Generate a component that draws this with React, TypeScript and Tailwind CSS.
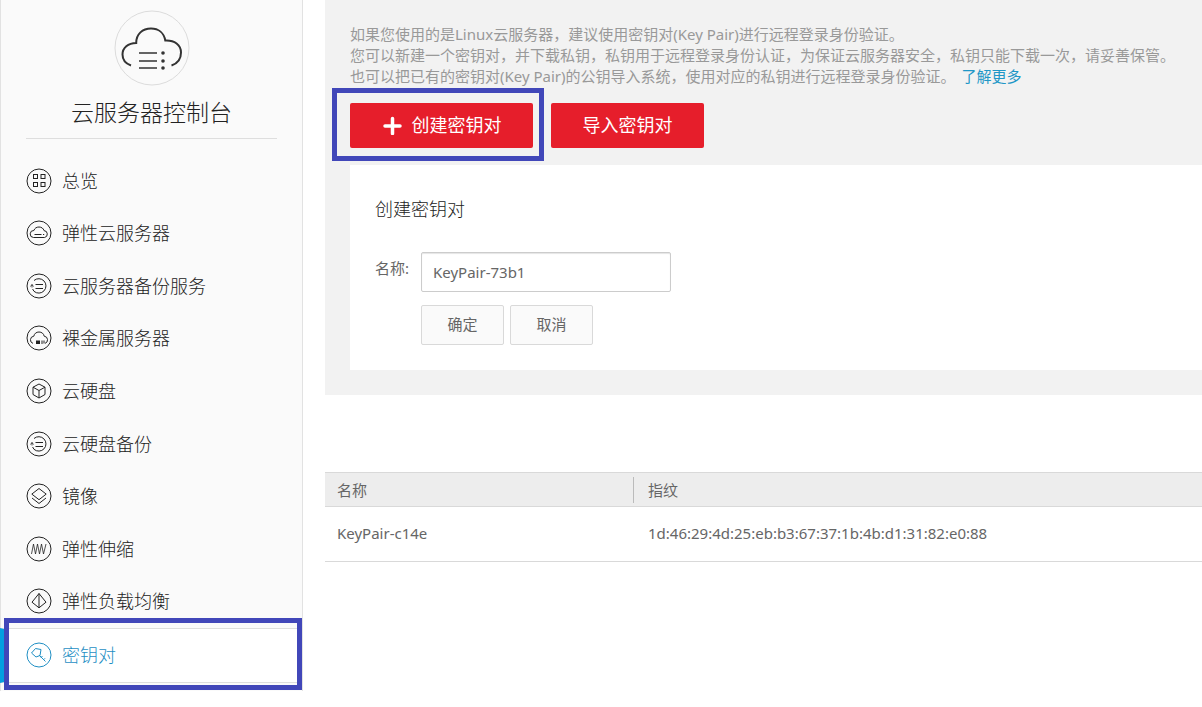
import { useState } from 'react'
import type { ReactNode } from 'react'
import clsx from 'clsx'

interface NavItem {
  key: string
  label: string
  icon: ReactNode
}

const backupIcon = (
  <>
    <path d="M8 7.500A7.200 7.200 0 1 1 8 18.300L6.600 16" />
    <path d="M9.500 11.500h7.500M9.500 15.500h7.500" />
    <path d="M4.500 13.500l1.500-2 1.500 2M6 11.500v3" strokeWidth="0.800" />
  </>
)

const NAV_ITEMS: NavItem[] = [
  {
    key: 'overview',
    label: '总览',
    icon: (
      <>
        <rect x="7.500" y="6.500" width="4" height="4" />
        <rect x="15" y="6.500" width="4" height="4" />
        <rect x="7.500" y="14.500" width="4" height="4" />
        <rect x="15" y="14.500" width="4" height="4" />
      </>
    ),
  },
  {
    key: 'ecs',
    label: '弹性云服务器',
    icon: (
      <>
        <path d="M7.500 17.500a3.500 3.500 0 0 1 .4-7c.7-2.300 2.700-3.500 5.100-3.500s4.400 1.300 5 3.600a3.500 3.500 0 0 1 .6 6.900z" />
        <path d="M8.500 14.500h7M17 14.500h1.200" />
      </>
    ),
  },
  { key: 'csbs', label: '云服务器备份服务', icon: backupIcon },
  {
    key: 'bms',
    label: '裸金属服务器',
    icon: (
      <>
        <path d="M7 18.400a3.700 3.700 0 0 1 .8-7.200C8.300 8.600 10.300 7 13 7s4.700 1.600 5.200 4.200a3.700 3.700 0 0 1 .8 7.200" />
        <rect x="10.500" y="16" width="3" height="2.500" fill="currentColor" />
        <path d="M16 15.500v3.500M18 15.500v3" />
      </>
    ),
  },
  {
    key: 'evs',
    label: '云硬盘',
    icon: (
      <>
        <path d="M13 6l6 3.200v7.300L13 20l-6-3.500V9.200z" />
        <path d="M7 9.200l6 3.300 6-3.300M13 12.500V20" />
      </>
    ),
  },
  { key: 'vbs', label: '云硬盘备份', icon: backupIcon },
  {
    key: 'ims',
    label: '镜像',
    icon: (
      <>
        <path d="M13 5.500l7.200 5.600-7.200 5.600-7.200-5.600z" />
        <path d="M6 15l7 5.500 7-5.500" />
      </>
    ),
  },
  {
    key: 'as',
    label: '弹性伸缩',
    icon: <path d="M5.500 18L7.500 8l2 10 2-10 2 10 2-10 2 10 2.500-10" strokeWidth="0.800" />,
  },
  {
    key: 'elb',
    label: '弹性负载均衡',
    icon: (
      <>
        <path d="M13 5.500l7 8.700-7 5.600-7-5.600z" />
        <path d="M13 5.500v14.300" />
      </>
    ),
  },
  {
    key: 'keypair',
    label: '密钥对',
    icon: (
      <>
        <path d="M9.500 6.500l5.500 1-1 6-4 1.500L5.500 11z" />
        <path d="M13 13l6.500 6.500M15 15.500l1.500-1.500M17.500 17.800l1.500-1.500" />
      </>
    ),
  },
]

const KEY_PAIRS = [
  { name: 'KeyPair-c14e', fingerprint: '1d:46:29:4d:25:eb:b3:67:37:1b:4b:d1:31:82:e0:88' },
]

function NavIcon({ children }: { children: ReactNode }) {
  return (
    <svg
      width="26"
      height="26"
      viewBox="0 0 26 26"
      fill="none"
      stroke="currentColor"
      strokeWidth="1"
      className="shrink-0"
      aria-hidden="true"
    >
      <circle cx="13" cy="13" r="12" />
      {children}
    </svg>
  )
}

function CloudLogo() {
  return (
    <svg width="76" height="76" viewBox="0 0 76 76" fill="none" className="text-[#333]" aria-hidden="true">
      <circle cx="38" cy="38" r="37" stroke="#dcdcdc" />
      <path
        d="M17 55.500C11.500 53.500 8.500 49.500 8.500 44.500c0-6.500 5.500-11.500 13.700-11.500C22.200 24 28.500 18.500 37 18.500c7.500 0 13 4.500 14.300 12C60.500 30 67 35 67 42.500c0 6-3.500 11-9.500 13"
        stroke="currentColor"
        strokeWidth="2"
      />
      <path d="M25 43h18M25 51h18M25 58h18" stroke="currentColor" strokeWidth="1.600" />
      <g fill="currentColor">
        <circle cx="49" cy="43" r="1.800" />
        <circle cx="49" cy="51" r="1.800" />
        <circle cx="49" cy="58" r="1.800" />
      </g>
    </svg>
  )
}

function Sidebar() {
  const active = 'keypair'
  const items = NAV_ITEMS.filter(item => item.key !== active)
  const current = NAV_ITEMS.find(item => item.key === active)!

  return (
    <aside className="w-[303px] shrink-0 self-start border-x border-[#e2e2e2] bg-[#fafafa] pt-[10px] pb-2 font-light">
      <div className="mx-[25px] flex flex-col items-center border-b border-[#dedede]">
        <CloudLogo />
        <h1 className="mt-2.5 mb-2.5 text-[23px] leading-8 text-[#222]">云服务器控制台</h1>
      </div>
      <nav className="mt-4">
        <ul className="grid h-[473px] auto-rows-fr">
          {items.map(item => (
            <li key={item.key}>
              <a href="#" className="flex h-full items-center gap-2.5 pb-px pl-[25px] text-lg leading-6 text-[#222]">
                <NavIcon>{item.icon}</NavIcon>
                {item.label}
              </a>
            </li>
          ))}
        </ul>
        <div className="relative">
          <a
            href="#"
            aria-current="page"
            className="-ml-px flex h-[55px] items-center gap-2.5 border-y border-l-4 border-y-[#dedede] border-l-[#049fe0] bg-white pb-0.5 pl-[22px] text-lg leading-6 text-[#1f8fc4]"
          >
            <NavIcon>{current.icon}</NavIcon>
            {current.label}
          </a>
          <div className="pointer-events-none absolute -top-2.5 -bottom-[7px] left-[3px] right-0 border-[5px] border-[#4147b9]" />
        </div>
      </nav>
    </aside>
  )
}

function CreateForm({ onClose }: { onClose: () => void }) {
  const [name, setName] = useState('KeyPair-73b1')
  const buttonClass =
    'h-10 w-[83px] rounded-xs border border-[#d9d9d9] bg-[#fafafa] pb-0.5 text-[15px] text-[#666] hover:bg-[#f2f2f2]'

  return (
    <form className="bg-white px-[25px] pt-7 pb-[25px]" onSubmit={e => e.preventDefault()}>
      <h2 className="text-lg leading-8 font-light text-[#222]">创建密钥对</h2>
      <div className="mt-[27px] flex">
        <label htmlFor="name" className="w-[46px] shrink-0 pt-1 leading-6">
          名称:
        </label>
        <div>
          <input
            id="name"
            value={name}
            onChange={e => setName(e.target.value)}
            className="block h-10 w-[250px] rounded-xs border border-[#ccc] bg-white px-[11px] text-[15px] text-[#666] shadow-[inset_0_1px_1px_#e5e5e5] outline-none"
          />
          <div className="mt-[13px] flex gap-1.5">
            <button type="submit" className={buttonClass}>确定</button>
            <button type="button" onClick={onClose} className={buttonClass}>取消</button>
          </div>
        </div>
      </div>
    </form>
  )
}

export default function App() {
  const [formOpen, setFormOpen] = useState(true)

  return (
    <div className="flex bg-white font-['Noto_Sans','Noto_Sans_CJK_SC',sans-serif] text-[15px] text-[#666]">
      <Sidebar />
      <main className="ml-[22px] min-w-0 flex-1">
        <section className="bg-[#f2f2f2] pt-6 pb-[25px] pl-[25px]">
          <div className="leading-[21px] text-[#999]">
            <p>如果您使用的是Linux云服务器，建议使用密钥对(Key Pair)进行远程登录身份验证。</p>
            <p>您可以新建一个密钥对，并下载私钥，私钥用于远程登录身份认证，为保证云服务器安全，私钥只能下载一次，请妥善保管。</p>
            <p>
              也可以把已有的密钥对(Key Pair)的公钥导入系统，使用对应的私钥进行远程登录身份验证。
              <a href="#" className="ml-1.5 text-[#1f97c7]">了解更多</a>
            </p>
          </div>

          <div className="mt-4 mb-[17px] flex gap-[18px]">
            <div className="relative">
              <button
                onClick={() => setFormOpen(true)}
                className="flex h-[45px] w-[183px] items-center justify-center gap-2.5 rounded-xs bg-[#e61e2b] pb-0.5 text-lg leading-6 text-white"
              >
                <svg width="20" height="20" viewBox="0 0 20 20" stroke="currentColor" strokeWidth="3.500" strokeLinecap="round" aria-hidden="true">
                  <path d="M10.500 3.500v15M3 11h15" />
                </svg>
                创建密钥对
              </button>
              <div className="pointer-events-none absolute -top-[15px] -right-[11px] -bottom-[13px] -left-[18px] border-[5px] border-[#4147b9]" />
            </div>
            <button className="h-[45px] w-[153px] rounded-xs bg-[#e61e2b] pb-0.5 text-lg leading-6 text-white">导入密钥对</button>
          </div>

          {formOpen && <CreateForm onClose={() => setFormOpen(false)} />}
        </section>

        <table className="mt-[77px] w-full table-fixed border-collapse text-left">
          <thead>
            <tr className="h-[34px] border-y border-[#d9d9d9] bg-[#ededed]">
              {['名称', '指纹'].map((title, i) => (
                <th key={title} scope="col" className={clsx('p-0 font-normal', i === 0 && 'w-[309px]')}>
                  <div className={clsx('leading-[26px]', i === 0 ? 'border-r border-[#bbb] pl-3' : 'pl-3.5')}>
                    {title}
                  </div>
                </th>
              ))}
            </tr>
          </thead>
          <tbody>
            {KEY_PAIRS.map(pair => (
              <tr key={pair.name} className="h-[55px] border-b border-[#d9d9d9]">
                <td className="pb-0.5 pl-3">{pair.name}</td>
                <td className="pb-0.5 pl-3.5">{pair.fingerprint}</td>
              </tr>
            ))}
          </tbody>
        </table>
      </main>
    </div>
  )
}
